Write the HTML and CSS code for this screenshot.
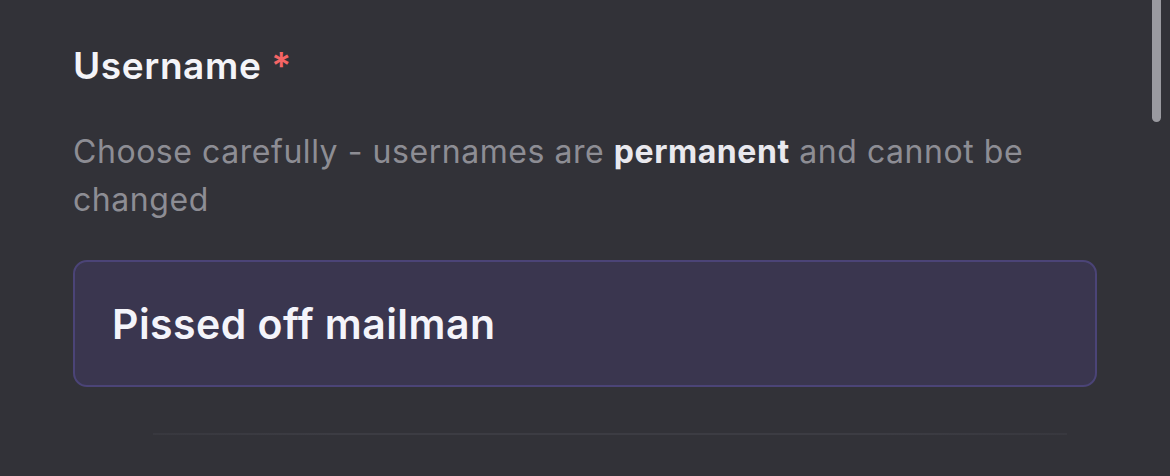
FILE: index.html
```html
<!DOCTYPE html>
<html>
<head>
<meta charset="utf-8">
<link rel="stylesheet" href="styles.css">
</head>
<body>
<div class="field">
  <div class="label">Username <span class="req">*</span></div>
  <p class="help">Choose carefully - usernames are <strong>permanent</strong> and cannot be changed</p>
  <div class="input">Pissed off mailman</div>
  <div class="divider"></div>
</div>
<div class="scrollbar"></div>
</body>
</html>
```
FILE: styles.css
```css
html, body {
  margin: 0;
  padding: 0;
  background: #323238;
  height: 100%;
  overflow: hidden;
  font-family: Inter, "Noto Sans", sans-serif;
}
.field {
  width: 1024px;
  padding: 44px 0 0 73px;
  display: flex;
  flex-direction: column;
}
.label {
  font-size: 37px;
  font-weight: 600;
  color: #f4f4f8;
  line-height: 44px;
  letter-spacing: 0.6px;
}
.req {
  color: #f56565;
}
.help {
  margin: 40px 0 0 0;
  font-size: 32px;
  line-height: 48px;
  color: #8d8d94;
  letter-spacing: 0.55px;
}
.help strong {
  color: #e9e9ee;
  font-weight: 700;
}
.input {
  margin-top: 36px;
  box-sizing: border-box;
  height: 127px;
  border: 2px solid #4b4477;
  border-radius: 14px;
  background: #3a364f;
  color: #f4f4fa;
  font-size: 41px;
  font-weight: 600;
  letter-spacing: 0.45px;
  display: flex;
  align-items: center;
  padding-left: 37px;
}
.divider {
  margin: 46px 30px 0 80px;
  height: 2px;
  background: linear-gradient(90deg, rgba(70,70,78,0.3), #3c3c43 20%, #3c3c43 80%, rgba(70,70,78,0.3));
}
.scrollbar {
  position: absolute;
  top: 0;
  left: 1152px;
  width: 9px;
  height: 122px;
  border-radius: 0 0 5px 5px;
  background: #9a9aa0;
}
```
